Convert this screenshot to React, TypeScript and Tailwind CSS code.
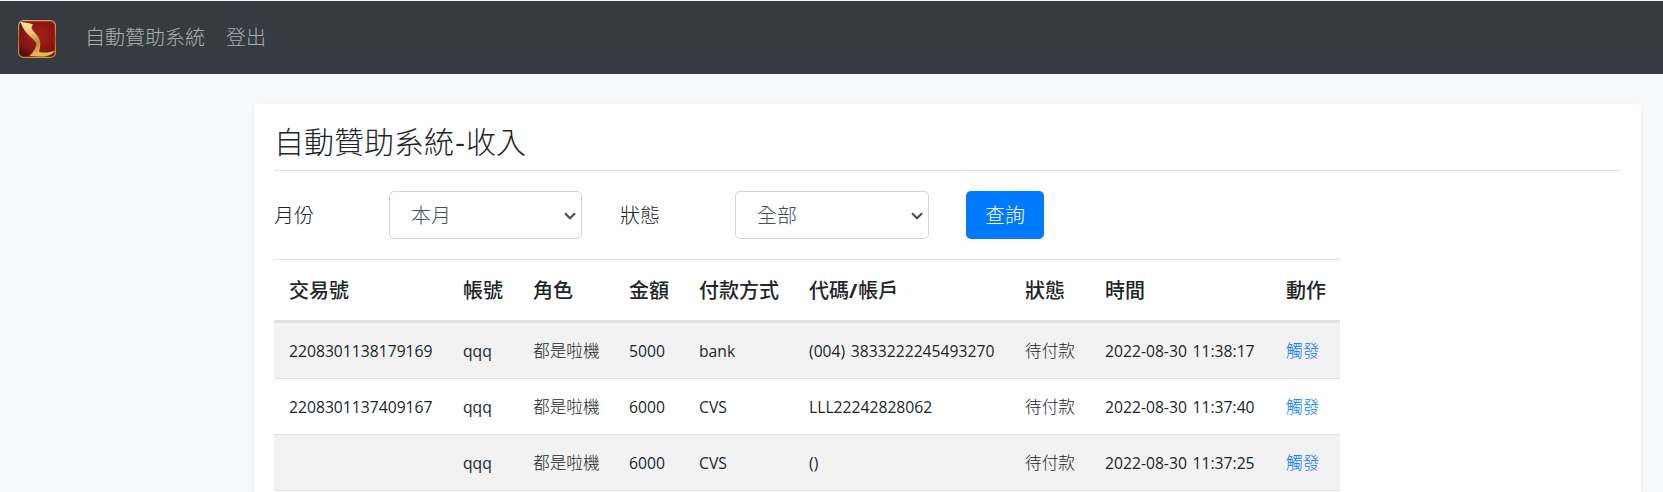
import React from "react";

type Row = {
  id: string;
  account: string;
  role: string;
  amount: string;
  method: string;
  code: string;
  status: string;
  time: string;
};

const rows: Row[] = [
  { id: "2208301138179169", account: "qqq", role: "都是啦機", amount: "5000", method: "bank", code: "(004) 3833222245493270", status: "待付款", time: "2022-08-30 11:38:17" },
  { id: "2208301137409167", account: "qqq", role: "都是啦機", amount: "6000", method: "CVS", code: "LLL22242828062", status: "待付款", time: "2022-08-30 11:37:40" },
  { id: "", account: "qqq", role: "都是啦機", amount: "6000", method: "CVS", code: "()", status: "待付款", time: "2022-08-30 11:37:25" },
];

const headers: React.ReactNode[] = [
  "交易號",
  "帳號",
  "角色",
  "金額",
  "付款方式",
  <>
    代碼<span className="font-bold tracking-[1px]">/</span>帳戶
  </>,
  "狀態",
  "時間",
  "動作",
];

function Logo() {
  return (
    <svg className="mt-px h-[38px] w-[38px] shrink-0" viewBox="0 0 38 38" aria-hidden="true">
      <defs>
        <radialGradient id="red" cx="0.55" cy="0.4" r="0.72">
          <stop offset="0" stopColor="#a3221a" />
          <stop offset="0.65" stopColor="#861511" />
          <stop offset="1" stopColor="#4a0a08" />
        </radialGradient>
        <linearGradient id="gold" x1="0" y1="0" x2="0.3" y2="1">
          <stop offset="0" stopColor="#ffe7a6" />
          <stop offset="0.35" stopColor="#f3cc80" />
          <stop offset="0.68" stopColor="#b58a3c" />
          <stop offset="1" stopColor="#e0bb58" />
        </linearGradient>
        <linearGradient id="rim" x1="0" y1="0" x2="0" y2="1">
          <stop offset="0" stopColor="#d9a566" />
          <stop offset="0.5" stopColor="#a8720f" />
          <stop offset="1" stopColor="#cf9a2c" />
        </linearGradient>
      </defs>
      <rect x="0.6" y="0.6" width="36.8" height="36.8" rx="5" fill="url(#red)" stroke="url(#rim)" strokeWidth="1.2" />
      <path
        d="M2.2 1.8 L12.5 3.6 L15 4.6 L13.4 7.4 C14.8 12 21.4 15.4 22.2 22.4 C22.6 26.2 21.4 29.4 21.2 32 C27 33.2 32.4 32.4 37 30.4 C34.8 34.8 29 36.8 22 36.5 L11.4 36 C14.2 33.4 18 28.6 18.4 24.6 C17.8 20.8 13.2 18 10 14.6 C6.6 11 4.4 7 2.2 1.8 Z"
        fill="url(#gold)"
      />
    </svg>
  );
}

function Select({ value, className }: { value: string; className: string }) {
  return (
    <button
      type="button"
      className={`flex h-12 items-center justify-between rounded-[5px] border border-[#ced4da] bg-white pl-[21px] pr-[5px] text-xl font-light text-[#495057] ${className}`}
    >
      <span className="pt-0.5">{value}</span>
      <svg className="mt-0.5 h-3 w-3" viewBox="0 0 12 12" fill="none" stroke="#495057" strokeWidth="2.2" aria-hidden="true">
        <path d="M1 3.3 L6 8.3 L11 3.3" />
      </svg>
    </button>
  );
}

export default function App() {
  const latin = "px-[15px] pt-0.5 text-[15.7px] [word-spacing:1.6px] whitespace-nowrap";
  const han = "px-[15px] text-[16.67px] font-light whitespace-nowrap";
  return (
    <div className="flex h-screen flex-col overflow-hidden bg-[#f8f9fb] font-['Open_Sans','Noto_Sans_CJK_TC',sans-serif] text-[#212529]">
      <nav className="flex h-[74px] shrink-0 items-center border-t border-[#eef5f2] bg-[#363a41] pl-[18px] pt-px text-xl font-light text-[#acaeb1]">
        <Logo />
        <a className="ml-[29px]">自動贊助系統</a>
        <a className="ml-[21px]">登出</a>
      </nav>
      <main className="ml-[254px] mr-[22px] mt-[30px] min-h-0 flex-1 rounded-t-[5px] bg-white px-5 shadow-[0_2px_5px_rgba(0,0,0,0.075)]">
        <h1 className="flex h-[67px] items-center border-b border-[#dee2e6] pt-[10px] text-[30px] leading-none font-light">
          自動贊助系統<span className="w-3 text-center font-normal">-</span>收入
        </h1>
        <div className="mt-5 flex h-12 items-center text-xl font-light">
          <label className="w-[115px] pt-0.5">月份</label>
          <Select value="本月" className="w-[193px]" />
          <label className="ml-[38px] w-[115px] pt-0.5">狀態</label>
          <Select value="全部" className="w-[194px]" />
          <button type="button" className="ml-[37px] h-12 w-[78px] rounded-[5px] bg-[#007bff] pt-0.5 text-white">
            查詢
          </button>
        </div>
        <table className="mt-5 w-[1066px] table-fixed border-separate border-spacing-0 text-left">
          <colgroup>
            <col className="w-[174px]" />
            <col className="w-[70px]" />
            <col className="w-[96px]" />
            <col className="w-[70px]" />
            <col className="w-[110px]" />
            <col className="w-[216px]" />
            <col className="w-[80px]" />
            <col className="w-[181px]" />
            <col className="w-[69px]" />
          </colgroup>
          <thead>
            <tr>
              {headers.map((h, i) => (
                <th
                  key={i}
                  className="h-16 border-t border-b-[3px] border-[#dee2e6] px-[15px] pt-0.5 pb-0 text-xl font-medium whitespace-nowrap"
                >
                  {h}
                </th>
              ))}
            </tr>
          </thead>
          <tbody className="[&_td]:h-14 [&_td]:border-b [&_td]:border-[#dee2e6] [&_td]:pb-0">
            {rows.map((r) => (
              <tr key={r.time} className="odd:bg-[#f2f2f2]">
                <td className={latin}>{r.id}</td>
                <td className={latin}>{r.account}</td>
                <td className={han}>{r.role}</td>
                <td className={latin}>{r.amount}</td>
                <td className={latin}>{r.method}</td>
                <td className={latin}>{r.code}</td>
                <td className={han}>{r.status}</td>
                <td className={latin}>{r.time}</td>
                <td className={han}>
                  <a className="text-[#007bff]">觸發</a>
                </td>
              </tr>
            ))}
          </tbody>
        </table>
      </main>
    </div>
  );
}
